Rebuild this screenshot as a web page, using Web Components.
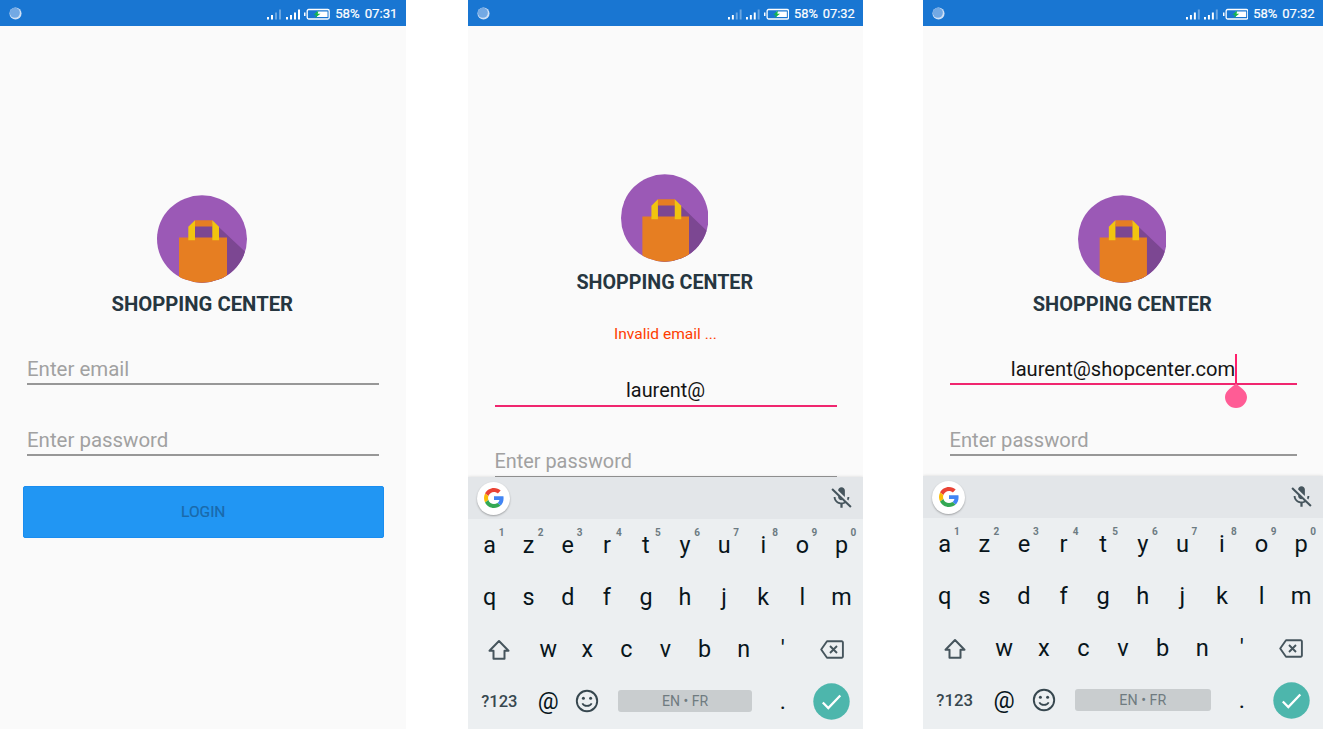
<!DOCTYPE html>
<html lang="en">
<head>
<meta charset="utf-8">
<title>Shopping Center</title>
<style>
html,body{margin:0;height:100%;background:#fff;overflow:hidden}
body{font-family:Roboto,"Liberation Sans",sans-serif}
main{display:grid;grid-template-columns:406px 62px 395px 60px 400px;height:729px}
#first{grid-column:1;--k:1;--side:27px;--top:169px}
#second{grid-column:3;--k:.972;--side:26.5px;--top:148px}
#third{grid-column:5;--k:.985;--side:26.5px;--top:169px}
#second soft-keyboard{height:252px}
#third soft-keyboard{height:253px}
</style>
</head>
<body>
<main>
  <phone-screen id="first" time="07:31" signal="2 4">
    <text-field placeholder="Enter email"></text-field>
    <text-field placeholder="Enter password"></text-field>
    <login-button slot="action">LOGIN</login-button>
  </phone-screen>
  <phone-screen id="second" time="07:32" signal="2 3">
    <error-text>Invalid email ...</error-text>
    <text-field active value="laurent@"></text-field>
    <text-field placeholder="Enter password"></text-field>
    <soft-keyboard slot="bottom"></soft-keyboard>
  </phone-screen>
  <phone-screen id="third" time="07:32" signal="3 3">
    <text-field active caret value="laurent@shopcenter.com"></text-field>
    <text-field placeholder="Enter password"></text-field>
    <soft-keyboard slot="bottom"></soft-keyboard>
  </phone-screen>
</main>
<script>
class Base extends HTMLElement{
  connectedCallback(){
    if(this.shadowRoot) return;
    this.attachShadow({mode:'open'}).innerHTML=this.view();
  }
}

customElements.define('status-bar',class extends Base{
  view(){
    const bars=['M0 9h2v2.5H0z','M4 7h2v4.5H4z','M8 4.5h2v7H8z','M12 1.5h2v10h-2z'];
    const sig=n=>`<svg class="sig" height="12" viewBox="0 0 14.5 12" preserveAspectRatio="none">${bars.map((d,i)=>`<path fill="#fff" opacity="${i<n?1:.35}" d="${d}"/>`).join('')}</svg>`;
    return `<style>
    :host{display:flex;flex:none;align-items:center;height:26px;box-sizing:border-box;padding:1px calc(8.500px*var(--k)) 0 9px;background:#1976d2;color:#fff;font-size:calc(13.200px*var(--k))}
    svg{display:block}
    .dot{margin-right:auto}
    .sig{margin-right:calc(4px*var(--k));width:calc(14.500px*var(--k))}
    .bat{margin-right:calc(5px*var(--k));width:calc(26px*var(--k))}
    .pct{margin-right:calc(5px*var(--k))}
    span{white-space:nowrap;line-height:24px;-webkit-text-stroke:.2px #fff}
  </style>
  <svg class="dot" width="13" height="13" viewBox="0 0 14 14"><circle cx="7" cy="7" r="6.500" fill="#cfe0f5"/><circle cx="6.300" cy="6.300" r="5.400" fill="#73a9e4"/></svg>
  ${this.getAttribute('signal').split(' ').map(sig).join('')}
  <svg class="bat" height="12" viewBox="0 0 26 12" preserveAspectRatio="none"><rect x="3.200" y="1.500" width="22" height="9.500" rx="1.500" fill="none" stroke="#fff" stroke-width="1.300"/><path fill="#fff" d="M0 4.500h1.500v3.500H0zM13 3.500h10.500v5.500H13z"/><path fill="#14b84b" d="M14.500 2.500 9.500 6.700h2.800L11 10l5.500-4.200h-2.800z"/></svg>
  <span class="pct">58%</span><span>${this.getAttribute('time')}</span>`}
});

customElements.define('shop-logo',class extends Base{
  view(){return `<style>:host{display:block;width:calc(90px*var(--k));height:88px}svg{display:block;width:100%;height:100%}</style>
  <svg viewBox="0 0 90 88" preserveAspectRatio="none">
    <defs><clipPath id="c"><ellipse cx="45" cy="44" rx="45" ry="43.700"/></clipPath></defs>
    <g clip-path="url(#c)">
      <path fill="#9b59b6" d="M0 0h90v88H0z"/>
      <path fill="#7c4792" d="M36 29H58.500L97 65V88H36z"/>
      <path fill="#e67e22" d="M22 42.500h48V88H22zM38 25.200h17.500v6.200H38z"/>
      <path fill="#f1c40f" d="M38 25.200v20h-6.700V31.700zM55.300 25.200v20H62V31.700z"/>
    </g>
  </svg>`}
});

customElements.define('phone-screen',class extends Base{
  view(){return `<style>
    :host{display:flex;flex-direction:column;height:729px;background:#fafafa;overflow:hidden}
    .page{display:flex;flex-direction:column;flex:0 1 auto;min-height:0;align-items:center;padding:var(--top) var(--side) 0}
    shop-logo{flex:none;margin-right:2px}
    h1{flex:none;margin:8px 1.500px 26px 0;font-size:calc(20.300px*var(--k));line-height:26px;font-weight:700;color:#263640;white-space:nowrap}
    ::slotted(text-field){align-self:stretch;flex:none}
    ::slotted([slot=bottom]){flex:none;margin-top:auto}
  </style>
  <status-bar time="${this.getAttribute('time')}" signal="${this.getAttribute('signal')}"></status-bar>
  <div class="page"><shop-logo></shop-logo><h1>SHOPPING CENTER</h1><slot></slot></div>
  <slot name="action"></slot>
  <slot name="bottom"></slot>`}
});

customElements.define('error-text',class extends Base{
  view(){return `<style>:host{display:block;flex:none;height:31px;margin-bottom:12px;line-height:24px;font-size:calc(16px*var(--k));color:#ff3d00;white-space:nowrap}</style><slot></slot>`}
});

customElements.define('text-field',class extends Base{
  view(){
    const v=this.getAttribute('value');
    return `<style>
    :host{display:block;height:71px}
    .box{height:42px;box-sizing:border-box;padding-top:14px;border-bottom:2px solid #979797;font-size:calc(20.450px*var(--k));line-height:24px;color:#a1a1a1;white-space:nowrap}
    :host([active]) .box{border-bottom-color:#f0266f;color:#141414;text-align:center}
    .val{position:relative;display:inline-block;vertical-align:top}
    svg{position:absolute;left:100%;top:-3px;margin-left:-11px}
  </style>
  <div class="box">${v?`<span class="val">${v}${this.hasAttribute('caret')?`<svg width="24" height="55" viewBox="0 0 24 55"><path fill="#ff5c95" d="M12 29.500c3 3 11 7 11 13.500a11 11 0 0 1-22 0c0-6.500 8-10.500 11-13.500z"/><path fill="#ff1f6b" d="M11 0h2v29h-2z"/></svg>`:''}</span>`:this.getAttribute('placeholder')}</div>`}
});

customElements.define('login-button',class extends Base{
  view(){return `<style>:host{display:grid;flex:none;place-items:center;height:52px;margin:1px 22px 0 22.500px;box-sizing:border-box;border:1px solid #1a8df0;border-radius:2px;background:#2196f3;color:#1a69aa;font-size:15.500px;font-weight:400;-webkit-text-stroke:.2px #1a69aa}</style><slot></slot>`}
});

customElements.define('key-cap',class extends Base{
  view(){const h=this.getAttribute('hint');
  return `<style>
    :host{display:flex;align-items:center;justify-content:center;min-width:0;height:52px;font-size:calc(24px*var(--k));color:#08151b}
    .k{position:relative;display:grid;place-items:center}
    sup{position:absolute;left:50%;top:calc(50% - 18px);width:24px;text-align:center;font-size:10px;line-height:12px;font-weight:700;color:#6c7b82}
  </style><div class="k"><slot></slot>${h?`<sup>${h}</sup>`:''}</div>`}
});

customElements.define('soft-keyboard',class extends Base{
  view(){
    const keys=(s,h)=>[...s].map((c,i)=>`<key-cap${h?` hint="${(i+1)%10}"`:''}>${c}</key-cap>`).join('');
    return `<style>
    :host{display:block;position:relative;background:#eceff1;box-shadow:0 0 3px rgba(0,0,0,.15)}
    .bar{display:flex;align-items:center;justify-content:space-between;height:42px;background:#e3e6e9;padding:0 8px 0 9px;box-sizing:border-box}
    .g{display:grid;place-items:center;width:33px;height:33px;border-radius:50%;background:#fff;box-shadow:0 1px 2px rgba(0,0,0,.3)}
    svg{display:block}
    .row{display:grid;grid-template-columns:repeat(10,1fr);padding:0 2px}
    .r3{grid-template-columns:1.5fr repeat(7,1fr) 1.5fr}
    .r4{grid-template-columns:1.5fr 1fr 1fr 4fr 1fr 1.5fr}
    .mode{font-size:calc(17px*var(--k));font-weight:500;color:#37474f}
    .space{align-self:center;margin:0 11px;height:22px;border-radius:3px;background:#c9cdcf;color:#6f7b80;font-size:calc(14.500px*var(--k));line-height:23px;text-align:center}
  </style>
  <div class="bar">
    <div class="g"><svg width="20" height="20" viewBox="0 0 48 48"><path fill="#ea4335" d="M24 9.500c3.540 0 6.710 1.220 9.210 3.600l6.850-6.850C35.900 2.380 30.470 0 24 0 14.620 0 6.510 5.380 2.560 13.220l7.980 6.190C12.430 13.720 17.740 9.500 24 9.500z"/><path fill="#4285f4" d="M46.980 24.550c0-1.570-.15-3.090-.38-4.550H24v9.020h12.940c-.58 2.960-2.260 5.480-4.780 7.180l7.730 6c4.510-4.180 7.090-10.360 7.090-17.650z"/><path fill="#fbbc05" d="M10.530 28.590c-.48-1.450-.76-2.990-.76-4.590s.27-3.140.76-4.590l-7.980-6.190C.92 16.460 0 20.120 0 24c0 3.880.92 7.540 2.560 10.780l7.970-6.190z"/><path fill="#34a853" d="M24 48c6.480 0 11.930-2.130 15.890-5.810l-7.730-6c-2.150 1.450-4.920 2.300-8.160 2.300-6.260 0-11.570-4.220-13.470-9.910l-7.980 6.190C6.510 42.620 14.620 48 24 48z"/></svg></div>
    <svg width="27" height="26" viewBox="0 0 24 24" preserveAspectRatio="none"><path fill="#46555d" d="M19 11h-1.700c0 .74-.16 1.430-.43 2.050l1.230 1.230c.56-.98.9-2.090.9-3.280zm-4.020.17c0-.06.02-.11.02-.17V5c0-1.660-1.340-3-3-3S9 3.340 9 5v.18l5.980 5.990zM4.270 3 3 4.270l6.010 6.010V11c0 1.660 1.330 3 2.990 3 .22 0 .44-.03.65-.08l1.660 1.660c-.71.33-1.500.52-2.310.52-2.760 0-5.300-2.100-5.300-5.100H5c0 3.410 2.720 6.230 6 6.720V21h2v-3.280c.91-.13 1.770-.45 2.540-.9L19.730 21 21 19.730 4.270 3z"/></svg>
  </div>
  <div class="keys">
    <div class="row">${keys('azertyuiop',true)}</div>
    <div class="row">${keys('qsdfghjklm')}</div>
    <div class="row r3"><key-cap><svg width="24" height="26" viewBox="0 0 24 26"><path fill="none" stroke="#46555d" stroke-width="2" stroke-linejoin="round" d="M12 5 2.500 14.700H6.500v8h11v-8h4z"/></svg></key-cap>${keys("wxcvbn'")}<key-cap><svg width="26" height="24" viewBox="0 0 26 24"><g fill="none" stroke="#46555d" stroke-width="1.900" stroke-linejoin="round"><path d="M8 4.300H22.700a1.200 1.200 0 0 1 1.200 1.200v14a1.200 1.200 0 0 1-1.200 1.200H8L2.200 12.500z"/><path d="m11 9 7 7m0-7-7 7"/></g></svg></key-cap></div>
    <div class="row r4"><key-cap><span class="mode">?123</span></key-cap><key-cap>@</key-cap><key-cap><svg width="24" height="24" viewBox="0 0 24 24"><circle cx="12" cy="12" r="10.200" fill="none" stroke="#37474f" stroke-width="1.900"/><circle cx="8.400" cy="9.300" r="1.500" fill="#37474f"/><circle cx="15.600" cy="9.300" r="1.500" fill="#37474f"/><path d="M7.300 14.300c1.800 3.500 7.600 3.500 9.400 0" fill="none" stroke="#37474f" stroke-width="1.700"/></svg></key-cap><div class="space">EN • FR</div><key-cap>.</key-cap><key-cap><svg width="37" height="37" viewBox="0 0 37 37"><circle cx="18.500" cy="18.500" r="18.200" fill="#4db6ac"/><path d="m9.800 19.500 5.500 5.500L27.300 12.500" fill="none" stroke="#fff" stroke-width="2.300"/></svg></key-cap></div>
  </div>`}
});
</script>
</body>
</html>
